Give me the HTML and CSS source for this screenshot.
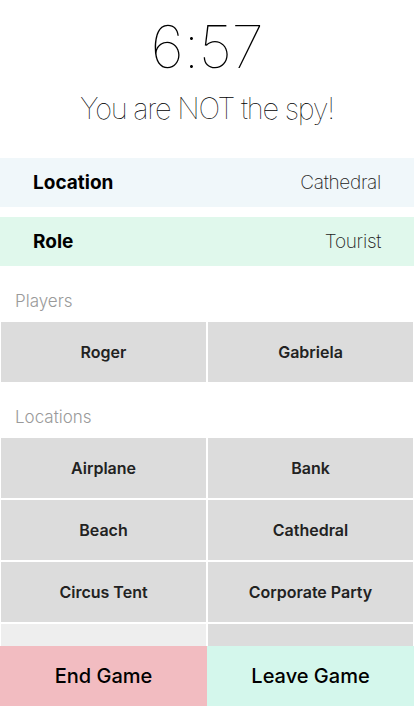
FILE: index.html
```html
<!DOCTYPE html>
<html lang="en">
<head>
<meta charset="utf-8">
<title>Spyfall</title>
<link rel="stylesheet" href="styles.css">
</head>
<body>
<div class="app">
  <main class="scroll">
    <header class="header">
      <div class="timer">6:57</div>
      <div class="status">You are NOT the spy!</div>
    </header>
    <div class="info info-location">
      <span class="info-label">Location</span>
      <span class="info-value">Cathedral</span>
    </div>
    <div class="info info-role">
      <span class="info-label">Role</span>
      <span class="info-value">Tourist</span>
    </div>
    <div class="section-label">Players</div>
    <div class="grid">
      <div class="cell">Roger</div>
      <div class="cell">Gabriela</div>
    </div>
    <div class="section-label">Locations</div>
    <div class="grid">
      <div class="cell">Airplane</div>
      <div class="cell">Bank</div>
      <div class="cell">Beach</div>
      <div class="cell">Cathedral</div>
      <div class="cell">Circus Tent</div>
      <div class="cell">Corporate Party</div>
      <div class="cell cell-pressed"></div>
      <div class="cell"></div>
    </div>
  </main>
  <footer class="actions">
    <button class="action action-end">End Game</button>
    <button class="action action-leave">Leave Game</button>
  </footer>
</div>
</body>
</html>
```
FILE: styles.css
```css
* { box-sizing: border-box; }
html, body {
  margin: 0;
  padding: 0;
  background: #ffffff;
  font-family: Inter, "Noto Sans", sans-serif;
  color: #111;
}
.app {
  height: 100vh;
  display: flex;
  flex-direction: column;
  overflow: hidden;
}
.scroll {
  flex: 1;
  overflow-y: auto;
  scrollbar-width: none;
}
.header {
  padding-top: 17px;
  padding-bottom: 34px;
  text-align: center;
}
.timer {
  font-size: 59px;
  line-height: 59px;
  font-weight: 100;
  color: #000;
  letter-spacing: -0.5px;
}
.status {
  margin-top: 18px;
  font-size: 29px;
  line-height: 30px;
  font-weight: 100;
  color: #000;
  letter-spacing: -1.25px;
}
.info {
  height: 49px;
  display: flex;
  align-items: center;
  justify-content: space-between;
  padding: 0 33px;
  font-size: 19px;
}
.info + .info { margin-top: 10px; }
.info-location { background: #f0f7fa; }
.info-role { background: #e0f8ec; }
.info-label {
  font-weight: 700;
  color: #000;
}
.info-value {
  font-weight: 200;
  color: #222;
  letter-spacing: -0.3px;
}
.section-label {
  padding: 24px 15px 10px;
  font-size: 17px;
  line-height: 22px;
  font-weight: 300;
  color: #9a9a9a;
}
.grid {
  display: grid;
  grid-template-columns: 1fr 1fr;
  gap: 2px;
  padding: 0 1px;
}
.cell {
  height: 60px;
  display: flex;
  align-items: center;
  justify-content: center;
  background: #dcdcdc;
  font-size: 16px;
  font-weight: 600;
  color: #222;
}
.cell-pressed { background: #eeeeee; }
.actions {
  height: 60px;
  flex: none;
  display: grid;
  grid-template-columns: 1fr 1fr;
}
.action {
  border: 0;
  margin: 0;
  padding: 0;
  font-family: inherit;
  font-size: 20px;
  font-weight: 500;
  color: #000;
}
.action-end { background: #f2bcc1; }
.action-leave { background: #d4f7ec; }
```
